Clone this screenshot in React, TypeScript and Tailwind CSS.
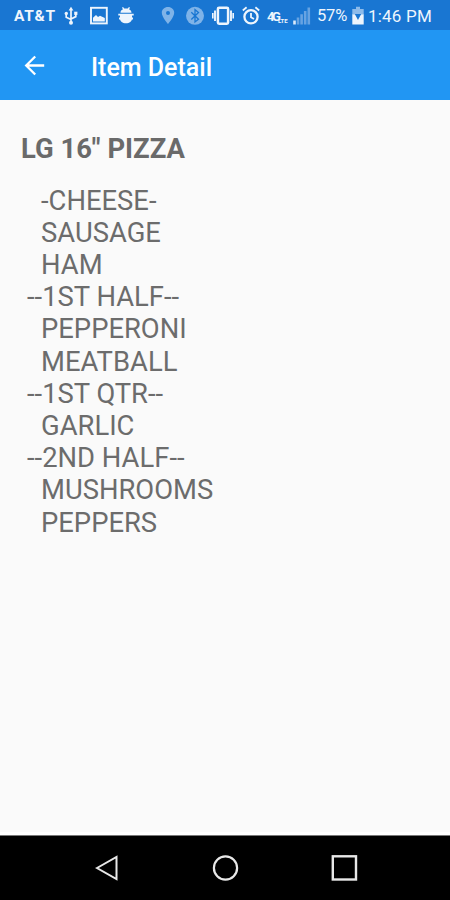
import type { ReactNode } from 'react'

const toppings = [
  '  -CHEESE-',
  '  SAUSAGE',
  '  HAM',
  '--1ST HALF--',
  '  PEPPERONI',
  '  MEATBALL',
  '--1ST QTR--',
  '  GARLIC',
  '--2ND HALF--',
  '  MUSHROOMS',
  '  PEPPERS',
]

function Icon({ w, className = '', children }: { w: number; className?: string; children: ReactNode }) {
  return (
    <svg width={w} height={20} viewBox={`0 0 ${w} 20`} fill="none" className={`shrink-0 ${className}`}>
      {children}
    </svg>
  )
}

function StatusBar() {
  return (
    <div className="flex h-[30px] items-center bg-[#1976d2] pt-px pl-3.5 text-[#eef5fd]">
      <span className="w-[50px] text-[15.5px] leading-5 font-bold tracking-[0.7px]">AT&amp;T</span>

      {/* usb */}
      <Icon w={14} className="mr-3">
        <path d="M7 3v13M2.2 8v3.2L7 13.5M11.8 8v2.6L7 13" stroke="currentColor" strokeWidth="1.7" />
        <path d="M7 .8 9.4 4.6H4.6z" fill="currentColor" />
        <circle cx="2.3" cy="7.4" r="1.7" fill="currentColor" />
        <path d="M10.2 5.7h3.2v3.2h-3.2z" fill="currentColor" />
        <circle cx="7" cy="16.8" r="2" fill="currentColor" />
      </Icon>
      {/* picture */}
      <Icon w={18} className="mr-2.5">
        <rect x="1" y="1.8" width="15.8" height="15.6" stroke="currentColor" strokeWidth="1.9" />
        <path d="M3 15.4v-3.6l3-2.7 2 2 2-1.4 4.8 2.3v3.4z" fill="currentColor" />
      </Icon>
      {/* debug bug */}
      <Icon w={16} className="mr-[27px]">
        <path d="M2.5 6.8C2.5 4.200 5 2.500 8 2.500s5.500 1.700 5.500 4.300zM2 8h12v4.500c0 2.800-2.500 4.800-6 4.800s-6-2-6-4.800z" fill="currentColor" />
        <path d="M.3 8.700h15.400M1 12.500h14" stroke="currentColor" strokeWidth="1.800" />
        <path d="M4.500 1.300 6 3.400M11.500 1.300 10 3.400" stroke="currentColor" strokeWidth="1.400" />
      </Icon>
      {/* location */}
      <Icon w={14} className="mr-[11px] text-[#7fb3e8]">
        <path fillRule="evenodd" d="M7 1C3.4 1 .8 3.500.8 6.800.8 11.200 7 18 7 18s6.200-6.800 6.200-11.200C13.200 3.500 10.600 1 7 1zm0 4a2 2 0 1 1 0 4 2 2 0 0 1 0-4z" fill="currentColor" />
      </Icon>
      {/* bluetooth */}
      <Icon w={18} className="mr-2 text-[#7fb3e8]">
        <circle cx="9" cy="9.800" r="9" fill="currentColor" />
        <path d="M5.300 6.300l7.200 7L9 16V3.700l3.500 2.800-7.200 7" stroke="#1976d2" strokeWidth="1.300" />
      </Icon>
      {/* vibrate */}
      <Icon w={22} className="mr-2">
        <rect x="5.900" y="1.700" width="10.200" height="16" rx="1.200" stroke="currentColor" strokeWidth="2.500" />
        <path d="M3 4.500v10.400M19 4.500v10.400" stroke="currentColor" strokeWidth="1.900" />
        <path d="M.8 7v5.500M21.200 7v5.500" stroke="currentColor" strokeWidth="1.600" />
      </Icon>
      {/* alarm */}
      <Icon w={18} className="mr-[7px]">
        <circle cx="9" cy="10.800" r="6.600" stroke="currentColor" strokeWidth="2.300" />
        <path d="M.8 4.500 4.600 1.300M17.200 4.500l-3.800-3.200M9 7v4.300l3 1.700" stroke="currentColor" strokeWidth="1.800" />
      </Icon>
      {/* 4G with LTE at its foot */}
      <div className="flex w-[26px] shrink-0 pt-0.5 font-bold">
        <span className="w-[11px] text-[13px] leading-5 tracking-[-2.4px]">4G</span>
        <span className="pt-2.5 text-[6px] leading-[8px]">LTE</span>
      </div>
      {/* signal */}
      <Icon w={18} className="mr-1.5">
        <path d="M1.500 18.500v-4" stroke="#dbe9f9" strokeWidth="2.600" />
        <path d="M5 18.500v-7M8.600 18.500V8.300M12.200 18.500V5M15.800 18.500V1.500" stroke="#67a3e2" strokeWidth="2.600" />
      </Icon>
      <span className="w-[35px] text-[16.5px] leading-5 tracking-[-0.2px]">57%</span>
      {/* battery */}
      <Icon w={12} className="mr-1">
        <path d="M4 .8h4V3h3.700v6H.3V3H4z" fill="#8dbbea" />
        <path d="M.3 8.500h11.400v10H.3z" fill="currentColor" />
        <path d="M2.800 8h6.400L6 14z" fill="#1976d2" />
      </Icon>
      <span className="text-[17px] leading-5 tracking-[0.2px] whitespace-nowrap">1:46 PM</span>
    </div>
  )
}

export default function App() {
  return (
    <div className="flex h-[900px] w-[450px] flex-col overflow-hidden bg-[#fafafa] font-[Roboto,sans-serif]">
      <StatusBar />
      <header className="flex h-[70px] items-center bg-[#2196f3] pl-6 text-white">
        <svg width="22" height="22" viewBox="0 0 22 22" fill="none" className="mt-0.5 mr-[45px]">
          <path d="M20.200 10.500H2.500M11.200 1.500l-9 9 9 9" stroke="currentColor" strokeWidth="2.300" />
        </svg>
        <h1 className="pt-1.5 text-[25px] leading-8 font-medium">Item Detail</h1>
      </header>

      <main className="flex-1 px-[21px] pt-8">
        <h2 className="text-[27.4px] leading-[34px] font-bold text-[#6a6a6a]">LG 16" PIZZA</h2>
        <ul className="pt-[18.6px] text-[27.4px] leading-[32.2px] text-[#6c6c6c]">
          {toppings.map((line) => (
            <li key={line} className={line.startsWith('--') ? 'pl-[6px]' : 'pl-[20px]'}>
              {line.trim()}
            </li>
          ))}
        </ul>
      </main>

      <div className="h-[3px] bg-white" />
      <nav className="flex h-[65px] items-center border-t border-[#777] bg-black text-[#e8e8e8]">
        <svg width="24" height="28" viewBox="0 0 24 28" fill="none" stroke="currentColor" strokeWidth="2" className="ml-[95px]">
          <path d="M2 14 21.500 3v22z" />
        </svg>
        <svg width="28" height="28" viewBox="0 0 28 28" fill="none" stroke="currentColor" strokeWidth="2.2" className="ml-[92px]">
          <circle cx="14.500" cy="14" r="11.600" />
        </svg>
        <svg width="28" height="28" viewBox="0 0 28 28" fill="none" stroke="currentColor" strokeWidth="2.4" className="ml-[91px]">
          <rect x="2.800" y="2.300" width="23.200" height="23.200" />
        </svg>
      </nav>
    </div>
  )
}
